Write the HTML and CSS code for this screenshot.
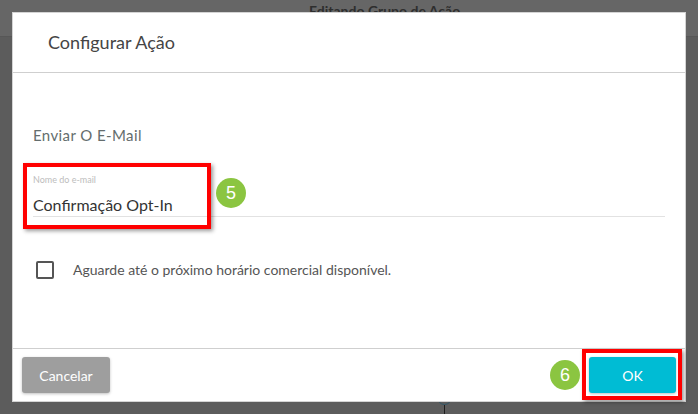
FILE: index.html
```html
<!DOCTYPE html>
<html>

<head>
    <meta charset="UTF-8">
    <title>Configurar Ação</title>
    <link rel="stylesheet" href="styles.css">
</head>

<body>
    <div class="topbar">
        <span class="page-title">Editando Grupo de Ação</span>
    </div>
    <div class="flow">
        <div class="node"></div>
        <div class="wire"></div>
    </div>

    <div class="dialog">
        <div class="dialog-header">
            <h1>Configurar Ação</h1>
        </div>
        <div class="dialog-body">
            <div class="action-name">Enviar O E-Mail</div>
            <div class="field">
                <label class="field-label">Nome do e-mail</label>
                <div class="field-value">Confirmação Opt-In</div>
            </div>
            <label class="check-row">
                <span class="checkbox"></span>
                <span>Aguarde até o próximo horário comercial disponível.</span>
            </label>
        </div>
        <div class="dialog-footer">
            <button class="btn btn-cancel">Cancelar</button>
            <button class="btn btn-ok">OK</button>
        </div>
    </div>

    <!-- annotations -->
    <div class="mark mark-field"></div>
    <div class="step step-5">5</div>
    <div class="mark mark-ok"></div>
    <div class="step step-6">6</div>
</body>
</html>
```

FILE: styles.css
```css
* {
    box-sizing: border-box;
    font-family: 'Lato', 'Liberation Sans', sans-serif;
}
body {
    margin: 0;
    width: 698px;
    height: 414px;
    overflow: hidden;
    background: #5c5c5c;
}
.topbar {
    height: 37px;
    background: #666666;
    border-bottom: 1px solid #575757;
    padding-left: 309px;
}
.page-title {
    display: block;
    padding-top: 2px;
    color: #2e2e2e;
    font-size: 14px;
    font-weight: bold;
}
.flow .node {
    position: absolute;
    left: 437px;
    top: 390px;
    width: 15px;
    height: 15px;
    border: 1px solid #2f5566;
    border-radius: 50%;
}
.flow .wire {
    position: absolute;
    left: 444px;
    top: 405px;
    width: 1px;
    height: 10px;
    background: #1e1e1e;
}
.dialog {
    position: absolute;
    left: 12px;
    top: 12px;
    width: 674px;
    height: 390px;
    display: flex;
    flex-direction: column;
    background: #fff;
    border: 1px solid #d4d4d4;
}
.dialog-header {
    height: 60px;
    padding: 18px 35px 0;
    border-bottom: 1px solid #cfcfcf;
}
.dialog-header h1 {
    margin: 0;
    color: #454545;
    font-size: 18px;
    font-weight: normal;
    line-height: 22px;
}
.dialog-body {
    flex: 1;
    padding: 53px 20px 0;
}
.action-name {
    color: #646d6d;
    font-size: 15px;
    letter-spacing: 0.4px;
    line-height: 18px;
}
.field {
    margin-top: 30px;
    border-bottom: 1px solid #e2e2e2;
    padding-bottom: 1px;
}
.field-label {
    display: block;
    color: #bdbdbd;
    font-size: 9px;
    line-height: 11px;
}
.field-value {
    margin-top: 10px;
    color: #333;
    font-size: 16px;
    line-height: 20px;
}
.check-row {
    display: flex;
    align-items: center;
    gap: 19px;
    margin-top: 44px;
    padding-left: 3px;
    color: #555;
    font-size: 14px;
    line-height: 18px;
}
.checkbox {
    width: 18px;
    height: 18px;
    border: 2px solid #555;
    border-radius: 2px;
}
.dialog-footer {
    height: 53px;
    display: flex;
    justify-content: space-between;
    padding: 8px 9px;
    border-top: 1px solid #cfcfcf;
}
.btn {
    height: 36px;
    border: 0;
    border-radius: 3px;
    color: #fff;
    font-size: 14px;
    box-shadow: 0 1px 3px rgba(0, 0, 0, 0.25);
}
.btn-cancel {
    width: 88px;
    background: #9e9e9e;
}
.btn-ok {
    width: 87px;
    background: #00bcd4;
}
.mark {
    position: absolute;
    border: 4px solid #ff0000;
    box-shadow: 2px 2px 4px rgba(0, 0, 0, 0.4);
}
.mark-field {
    left: 23px;
    top: 163px;
    width: 188px;
    height: 66px;
}
.mark-ok {
    left: 582px;
    top: 349px;
    width: 100px;
    height: 51px;
}
.step {
    position: absolute;
    width: 30px;
    height: 30px;
    border-radius: 50%;
    background: #8bc541;
    color: #fff;
    font-family: 'Liberation Sans', sans-serif;
    font-size: 18px;
    line-height: 30px;
    text-align: center;
}
.step-5 {
    left: 216px;
    top: 178px;
}
.step-6 {
    left: 550px;
    top: 360px;
}
```
